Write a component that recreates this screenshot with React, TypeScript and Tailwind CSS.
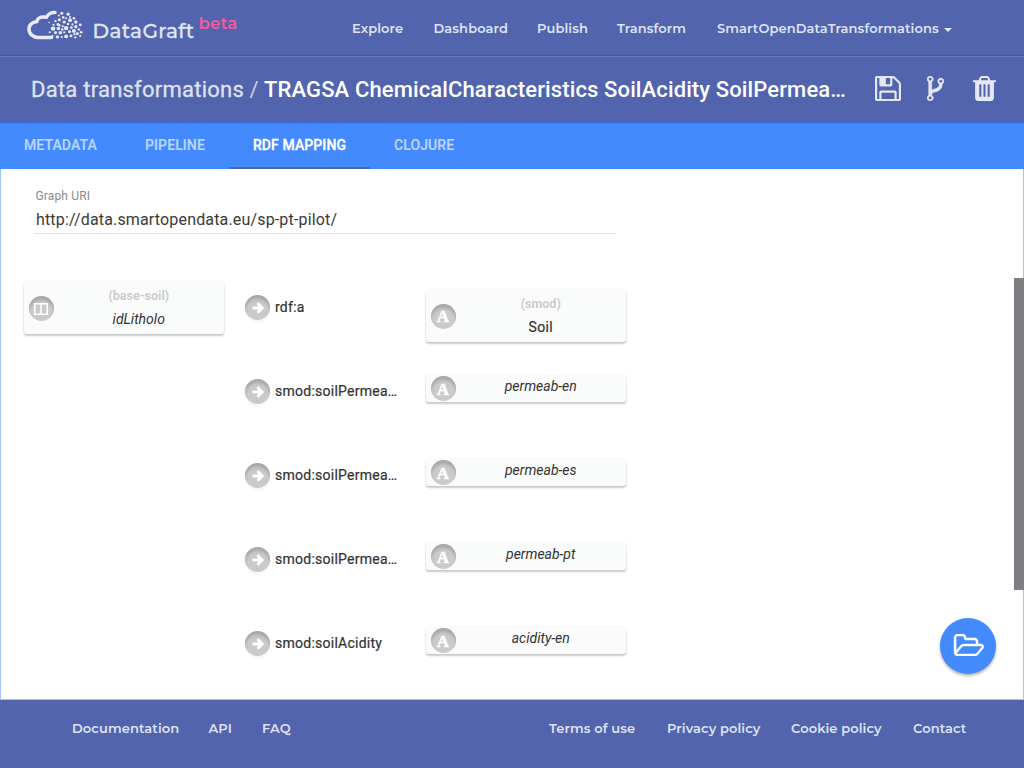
import React from "react";

const dots: [number, number, number][] = [
  [40.5, 8.5, 1.6], [37.5, 11, 1], [42, 13, 1.3], [47, 9.5, 1.6], [45, 14, 1], [49, 12.5, 1],
  [38, 15.5, 1.6], [34, 17, 1.2], [43, 18, 1.6], [49, 16, 1.9], [53, 14, 1.3], [47, 20, 1.2],
  [55, 18, 1.7], [51.5, 20.5, 1.1], [32, 21, 1.1], [36.5, 20.5, 1.3], [27.5, 18.5, 0.8],
  [31.5, 25, 2.2], [37, 25, 1.7], [41.5, 22.5, 1.1], [45, 24.5, 2.2], [50.5, 24, 1.3],
  [55, 23, 1.6], [59.5, 21, 1.4], [28, 29, 1], [34, 29.5, 1.5], [39, 29.5, 1.7], [43, 29, 1.1],
  [48.5, 28.5, 1.5], [53, 27.5, 1.9], [58, 26, 1.3], [60.5, 29, 1.3], [56.5, 30.5, 1.5],
  [36, 34, 1.6], [40.5, 34, 1], [45, 33.5, 1.9], [50, 33, 1.4], [54.5, 34.5, 1.1], [59.5, 33, 1.1],
  [31, 33, 1], [38, 21.5, 1.2], [53.5, 31, 1.1], [41, 26, 1.2],
];

const Logo = () => (
  <svg className="h-10 w-[62px] shrink-0" viewBox="0 0 62 40" fill="#e8eaf5">
    <path d="M31 7.500C25.500 7.200 24 9.500 22.500 12.200C15 11 13.500 13.800 12.800 16.500C7 17.500 5 21 5 24.200C5 29 9.500 32.600 14.500 32.600H27.500" fill="none" stroke="#e8eaf5" strokeWidth="3.500" strokeLinecap="round" />
    <g transform="translate(-1.500 .3) scale(.97 .93)">
      {dots.map(([x, y, r], i) => <circle key={i} cx={x} cy={y} r={r * 1.06} />)}
    </g>
  </svg>
);

const savePath = "M384 1536h768v-384h-768v384zM1280 1536h128v-896q0-14-10-38.5t-20-34.5l-281-281q-10-10-34-20t-39-10v416q0 40-28 68t-68 28h-576q-40 0-68-28t-28-68v-416h-128v1280h128v-416q0-40 28-68t68-28h832q40 0 68 28t28 68v416zM896 608v-320q0-13-9.5-22.5t-22.5-9.5h-192q-13 0-22.5 9.5t-9.5 22.5v320q0 13 9.5 22.5t22.5 9.5h192q13 0 22.500-9.500t9.500-22.500zM1536 640v928q0 40-28 68t-68 28h-1344q-40 0-68-28t-28-68v-1344q0-40 28-68t68-28h928q40 0 88 20t76 48l280 280q28 28 48 76t20 88z";
const forkPath = "M288 1472q0-40-28-68t-68-28-68 28-28 68 28 68 68 28 68-28 28-68zm0-1152q0-40-28-68t-68-28-68 28-28 68 28 68 68 28 68-28 28-68zm640 128q0-40-28-68t-68-28-68 28-28 68 28 68 68 28 68-28 28-68zm96 0q0 52-26 96.5t-70 69.5q-2 287-226 414-67 38-203 81-128 40-169.5 71t-41.5 100v26q44 25 70 69.5t26 96.5q0 80-56 136t-136 56-136-56-56-136q0-52 26-96.5t70-69.5v-820q-44-25-70-69.5t-26-96.5q0-80 56-136t136-56 136 56 56 136q0 52-26 96.5t-70 69.5v497q54-26 154-57 55-17 87.5-29.5t70.5-31 59-39.5 40.5-51 28-69.5 8.5-91.5q-44-25-70-69.5t-26-96.5q0-80 56-136t136-56 136 56 56 136z";
const trashPath = "M704 1376v-704q0-14-9-23t-23-9h-64q-14 0-23 9t-9 23v704q0 14 9 23t23 9h64q14 0 23-9t9-23zm256 0v-704q0-14-9-23t-23-9h-64q-14 0-23 9t-9 23v704q0 14 9 23t23 9h64q14 0 23-9t9-23zm256 0v-704q0-14-9-23t-23-9h-64q-14 0-23 9t-9 23v704q0 14 9 23t23 9h64q14 0 23-9t9-23zm-544-992h448l-48-117q-7-9-17-11h-317q-10 2-17 11zm928 32v64q0 14-9 23t-23 9h-96v948q0 83-47 143.5t-113 60.5h-832q-66 0-113-58.5t-47-141.5v-952h-96q-14 0-23-9t-9-23v-64q0-14 9-23t23-9h309l70-167q15-37 54-63t79-26h320q40 0 79 26t54 63l70 167h309q14 0 23 9t9 23z";
const folderPath = "M1845 931q0-35-53-35h-1088q-40 0-85.5 21.5t-71.5 52.5l-294 363q-18 24-18 40 0 35 53 35h1088q40 0 86-22t71-53l294-363q18-22 18-39zm-1141-163h768v-160q0-40-28-68t-68-28h-576q-40 0-68-28t-28-68v-64q0-40-28-68t-68-28h-320q-40 0-68 28t-28 68v853l256-315q44-53 116-87.5t140-34.5zm1269 163q0 62-46 120l-295 363q-43 53-116 87.5t-140 34.5h-1088q-92 0-158-66t-66-158v-960q0-92 66-158t158-66h320q92 0 158 66t66 158v32h544q92 0 158 66t66 158v160h192q54 0 99 24.5t67 70.5q15 32 15 68z";

const Badge = ({ kind }: { kind: "column" | "arrow" | "literal" }) => (
  <span className={`flex size-[25px] shrink-0 items-center justify-center rounded-full bg-[#cbc9ca] ${kind === "arrow" ? "shadow-[inset_0_4px_3px_#aaa8a9,0_3px_2px_#f6f9f8]" : "shadow-[inset_0_4px_3px_#aaa8a9]"}`}>
    {kind === "column" && (
      <svg className="mt-px h-3 w-[14px]" viewBox="0 0 14 12" fill="none" stroke="white" strokeWidth="1.5">
        <path d="M.75.75h12.5v10.5H.75zM7 1v10" />
      </svg>
    )}
    {kind === "arrow" && (
      <svg className="mt-px size-3" viewBox="0 0 14 14" fill="none" stroke="white" strokeWidth="3.500">
        <path d="M.5 7h11M6.400 1.500 11.900 7l-5.500 5.500" />
      </svg>
    )}
    {kind === "literal" && (
      <b className="mt-px font-['Liberation_Serif',serif] text-[17px] leading-none text-white [-webkit-text-stroke:.5px_white]">A</b>
    )}
  </span>
);

const cardClass = "flex w-[200px] shrink-0 items-center rounded-[3px] bg-[#fafcfb] pl-[4.5px] shadow-[0_2px_2px_rgba(0,0,0,.2),0_0_2px_rgba(0,0,0,.1)]";

const Card = ({ kind, prefix, name }: { kind: "column" | "literal"; prefix?: string; name: string }) => (
  <div className={`${cardClass} ${prefix ? "h-[52px]" : "h-[27px]"}`}>
    <Badge kind={kind} />
    <div className="flex flex-1 flex-col items-center text-[14px]">
      {prefix && <span className="-mt-[2px] h-[23px] text-[12.500px] leading-[23px] font-bold text-[#cccccc]">{prefix}</span>}
      <span className={`leading-6 text-[#333] ${prefix ? "" : "-mt-[5px]"} ${name === "Soil" ? "tracking-[.3px] [-webkit-text-stroke:.2px_#333]" : "italic"}`}>{name}</span>
    </div>
  </div>
);

const rows = [
  { property: "rdf:a", prefix: "(smod)", name: "Soil" },
  { property: "smod:soilPermea…", name: "permeab-en" },
  { property: "smod:soilPermea…", name: "permeab-es" },
  { property: "smod:soilPermea…", name: "permeab-pt" },
  { property: "smod:soilAcidity", name: "acidity-en" },
];

const navLink = "shrink-0 whitespace-nowrap font-['Montserrat','Inter',sans-serif] text-[13px] leading-5 font-semibold tracking-[.1px] text-[#dfe3f3]";

export default function App() {
  return (
    <div className="flex h-[768px] w-[1024px] flex-col overflow-hidden bg-white font-['Roboto',sans-serif]">
      <header className="flex h-[57px] shrink-0 border-b border-[#6c7cbc] bg-[#5264ae] pl-6 shadow-[inset_0_-1px_0_#4858a0]">
        <div className="flex w-[328px] items-start pt-[5px]">
          <Logo />
          <span className="mt-[12px] ml-[6.500px] w-[102px] font-['Montserrat','Inter',sans-serif] text-[20px] leading-7 font-medium tracking-[.4px] whitespace-nowrap text-[#dfe6f6] [-webkit-text-stroke:.3px_#dfe6f6]">DataGraft</span>
          <span className="mt-[6px] ml-[4px] font-['Montserrat','Inter',sans-serif] text-[16.500px] leading-6 font-semibold tracking-[.2px] text-[#f35b9c]">beta</span>
        </div>
        <nav className="flex items-start pt-[18px]">
          <a className={`${navLink} w-[81.500px]`}>Explore</a>
          <a className={`${navLink} w-[103.500px]`}>Dashboard</a>
          <a className={`${navLink} w-[80px]`}>Publish</a>
          <a className={`${navLink} w-[100px]`}>Transform</a>
          <a className={`${navLink} w-[227px]`}>SmartOpenDataTransformations</a>
          <svg className="mt-[10px] h-1 w-[8px]" viewBox="0 0 8 4" fill="#e3e6f4"><path d="M0 0h8L4 4z" /></svg>
        </nav>
      </header>

      <div className="relative z-10 flex h-[65px] shrink-0 items-start bg-[#5264ae] pl-[31px] shadow-[0_1px_2px_rgba(40,50,110,.4)]">
        <h1 className="w-[844px] pt-[17px] text-[22px] leading-8 whitespace-nowrap text-white">
          <span className="tracking-[.24px] text-[#dfe2f1] [-webkit-text-stroke:.3px_#dfe2f1]">Data transformations</span>
          <span className="text-[#cfcfd8]"> / </span>
          <span className="font-medium tracking-[.12px]">TRAGSA ChemicalCharacteristics SoilAcidity SoilPermea…</span>
        </h1>
        <svg className="mt-[19px] h-[25px] w-[26px]" viewBox="0 128 1536 1536" preserveAspectRatio="none" fill="#e5e8f4"><path d={savePath} /></svg>
        <svg className="mt-[19px] ml-[26px] h-[25px] w-[17px]" viewBox="0 128 1024 1536" preserveAspectRatio="none" fill="#e5e8f4" stroke="#e5e8f4" strokeWidth="20"><path d={forkPath} /></svg>
        <svg className="mt-[19px] ml-[28.500px] h-[25px] w-[23px]" viewBox="192 128 1408 1536" preserveAspectRatio="none" fill="#e5e8f4"><path d={trashPath} /></svg>
      </div>

      <div className="flex h-[47px] shrink-0 bg-[#448aff] text-[14px] leading-[46px] font-medium text-[#b9d6ff]">
        <a className="w-[121px] pl-6 tracking-[.1px] [-webkit-text-stroke:.2px_#b9d6ff]">METADATA</a>
        <a className="w-[108px] pl-6 tracking-[.1px] [-webkit-text-stroke:.2px_#b9d6ff]">PIPELINE</a>
        <a className="w-[141px] border-b-2 border-[#5264ae] text-center tracking-[.1px] text-white [-webkit-text-stroke:.3px_white]">RDF MAPPING</a>
        <a className="pl-6 tracking-[.1px] [-webkit-text-stroke:.2px_#b9d6ff]">CLOJURE</a>
      </div>

      <main className="flex h-[531px] shrink-0 border border-t-0 border-[#a1c4fd]">
        <div className="w-full">
          <div className="ml-[33px] h-[65px] w-[582px] border-b border-[#e0e0e0] pt-[18px]">
            <label className="block pl-[1.500px] text-[12px] leading-[18px] tracking-[.15px] text-[#8b8b8b]">Graph URI</label>
            <div className="pt-[3px] pl-[2px] text-[16px] leading-6 tracking-[.16px] text-[#3a3a3a]">http://data.smartopendata.eu/sp-pt-pilot/</div>
          </div>
          <div className="flex pt-8 pl-[23px]">
            <div className="w-[221px] pt-[16px]"><Card kind="column" prefix="(base-soil)" name="idLitholo" /></div>
            <div className="flex flex-col">
              {rows.map((r, i) => (
                <div key={i} className="flex h-[84px] items-start">
                  <div className="flex w-[181px] items-center pt-[29px]">
                    <Badge kind="arrow" />
                    <span className="-mt-[2px] ml-[5px] text-[14px] leading-6 tracking-[.25px] whitespace-nowrap text-[#333] [-webkit-text-stroke:.2px_#333]">{r.property}</span>
                  </div>
                  <div className={r.prefix ? "pt-6" : "pt-[25px]"}><Card kind="literal" prefix={r.prefix} name={r.name} /></div>
                </div>
              ))}
            </div>
          </div>
        </div>
      </main>

      <footer className="flex h-[68px] shrink-0 items-start bg-[#5264ae] pt-[18px] pl-[72px]">
        <a className={`${navLink} w-[136.500px]`}>Documentation</a>
        <a className={`${navLink} w-[53.500px]`}>API</a>
        <a className={`${navLink} w-[287px]`}>FAQ</a>
        <a className={`${navLink} w-[118px]`}>Terms of use</a>
        <a className={`${navLink} w-[124px]`}>Privacy policy</a>
        <a className={`${navLink} w-[122px]`}>Cookie policy</a>
        <a className={navLink}>Contact</a>
      </footer>

      <div className="absolute top-[278px] left-[1014px] h-[312px] w-[10px] bg-[#7e7f83]" />
      <button className="absolute top-[618px] left-[940px] flex size-14 items-center justify-center rounded-full bg-[#448aff] shadow-[0_2px_3px_rgba(0,0,0,.3)]">
        <svg className="-mt-[2px] h-[22px] w-[31px]" viewBox="0 128 1973 1408" fill="white" stroke="white" strokeWidth="30"><path d={folderPath} /></svg>
      </button>
    </div>
  );
}
